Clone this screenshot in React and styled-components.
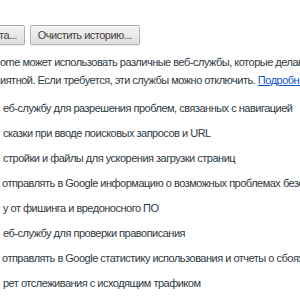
import React from "react";
import styled, { createGlobalStyle } from "styled-components";

const GlobalStyle = createGlobalStyle`
  html, body {
    margin: 0;
    padding: 0;
    background: #ffffff;
  }
  body {
    width: 300px;
    height: 300px;
    overflow: hidden;
    font-family: "Liberation Sans", Arial, sans-serif;
    font-size: 11px;
    letter-spacing: -0.5px;
    color: #303942;
  }
`;

const items = [
  "еб-службу для разрешения проблем, связанных с навигацией",
  "сказки при вводе поисковых запросов и URL",
  "стройки и файлы для ускорения загрузки страниц",
  "отправлять в Google информацию о возможных проблемах безопасности",
  "у от фишинга и вредоносного ПО",
  "еб-службу для проверки правописания",
  "отправлять в Google статистику использования и отчеты о сбоях",
  "рет отслеживания с исходящим трафиком",
];

const Section = styled.section`
  padding-top: 25px;
  white-space: nowrap;
`;

const ButtonRow = styled.div`
  display: flex;
  gap: 5px;
  margin-left: ${(p) => p.$shift}px;
`;

const Button = styled.button`
  height: 20px;
  padding: 0 7px;
  font-family: inherit;
  font-size: 11px;
  letter-spacing: inherit;
  color: #444;
  background-image: linear-gradient(#f2f2f2, #ececec 38%, #dedede);
  border: 1px solid rgba(0, 0, 0, 0.25);
  border-radius: 2px;
  box-shadow: 0 1px 0 rgba(0, 0, 0, 0.08), inset 0 1px 2px rgba(255, 255, 255, 0.75);
`;

const Intro = styled.p`
  margin: 8px 0 0;
  line-height: 18px;
`;

const Link = styled.a`
  color: #1155cc;
  text-decoration: underline;
`;

const List = styled.ul`
  list-style: none;
  margin: 10px 0 0;
  padding: 0;
  display: flex;
  flex-direction: column;
`;

const Item = styled.li`
  height: 25px;
  line-height: 18px;
  padding-left: ${(p) => p.$indent}px;
`;

export default function App() {
  return (
    <>
      <GlobalStyle />
      <Section>
        <ButtonRow $shift={-9}>
          <Button>та...</Button>
          <Button>Очистить историю...</Button>
        </ButtonRow>
        <Intro>
          ome может использовать различные веб-службы, которые делают работу
          <br />
          иятной. Если требуется, эти службы можно отключить. <Link href="#">Подробнее</Link>
        </Intro>
        <List>
          {items.map((t, i) => (
            <Item key={i} $indent={i === 3 || i === 6 ? 2 : 3}>
              {t}
            </Item>
          ))}
        </List>
      </Section>
    </>
  );
}
